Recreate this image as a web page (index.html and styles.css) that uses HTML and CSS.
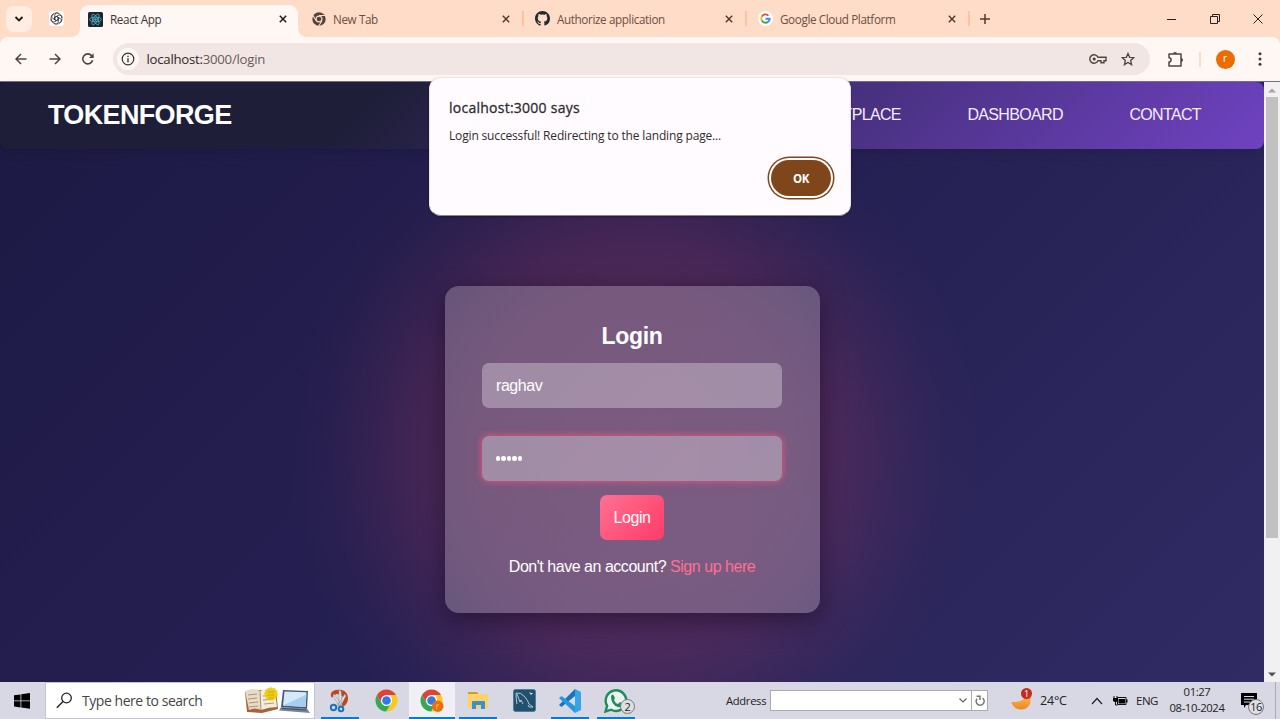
FILE: index.html
```html
<!DOCTYPE html>
<html lang="en">
<head>
<meta charset="utf-8">
<title>React App</title>
<link rel="stylesheet" href="styles.css">
</head>
<body>
<div class="screen">
  <header class="tabstrip">
    <div class="tab-search"><svg width="10" height="8" viewBox="0 0 10 8"><path d="M1.5 2 5 5.5 8.500 2" fill="none" stroke="#221a15" stroke-width="1.900"/></svg></div>
    <div class="pinned"><svg width="13" height="13" viewBox="0 0 24 24" fill="none" stroke="#333" stroke-width="1.600"><path d="M12 8.200 15.300 10v4L12 15.800 8.700 14v-4z"/><path d="M8.700 14V6a4.300 4.300 0 0 1 7.700-2.600"/><path d="M8.700 14V6a4.300 4.300 0 0 1 7.700-2.600" transform="rotate(60 12 12)"/><path d="M8.700 14V6a4.300 4.300 0 0 1 7.700-2.600" transform="rotate(120 12 12)"/><path d="M8.700 14V6a4.300 4.300 0 0 1 7.700-2.600" transform="rotate(180 12 12)"/><path d="M8.700 14V6a4.300 4.300 0 0 1 7.700-2.600" transform="rotate(240 12 12)"/><path d="M8.700 14V6a4.300 4.300 0 0 1 7.700-2.600" transform="rotate(300 12 12)"/><circle cx="12" cy="12" r="10.300" stroke-width="1.200"/></svg></div>
    <div class="tab tab-active">
      <svg class="fav" width="15" height="15" viewBox="0 0 15 15"><rect width="15" height="15" rx="1.500" fill="#20232a"/><g fill="none" stroke="#4cbcd8" stroke-width=".8"><ellipse cx="7.500" cy="7.500" rx="6" ry="2.300"/><ellipse cx="7.500" cy="7.500" rx="6" ry="2.300" transform="rotate(60 7.500 7.500)"/><ellipse cx="7.500" cy="7.500" rx="6" ry="2.300" transform="rotate(120 7.500 7.500)"/></g><circle cx="7.500" cy="7.500" r="1.200" fill="#4cbcd8"/></svg>
      <span class="tab-title">React App</span>
      <svg class="close" width="8" height="8" viewBox="0 0 8 8"><path d="M.8.8 7.200 7.200M7.200.8.8 7.200" stroke="#221a15" stroke-width="1.500"/></svg>
    </div>
    <div class="tab">
      <svg class="fav" width="14" height="14" viewBox="0 0 24 24"><circle cx="12" cy="12" r="11.500" fill="#51443d"/><circle cx="12" cy="12" r="5" fill="#51443d" stroke="#ffdcc8" stroke-width="2"/><path d="M12 6h11M7 15 1.500 5.500M17 15l-5.500 9" stroke="#ffdcc8" stroke-width="1.800"/></svg>
      <span class="tab-title">New Tab</span>
      <svg class="close" width="8" height="8" viewBox="0 0 8 8"><path d="M.8.8 7.200 7.200M7.200.8.8 7.200" stroke="#51372b" stroke-width="1.400"/></svg>
    </div>
    <div class="tab">
      <svg class="fav" width="15" height="15" viewBox="0 0 16 16"><path fill="#24292f" d="M8 0C3.580 0 0 3.580 0 8c0 3.540 2.290 6.530 5.470 7.590.4.070.55-.17.55-.38 0-.19-.01-.82-.01-1.490-2.010.37-2.530-.49-2.690-.94-.09-.23-.48-.94-.82-1.130-.28-.15-.68-.52-.01-.53.63-.01 1.080.58 1.230.82.72 1.210 1.870.87 2.330.66.070-.52.28-.87.51-1.070-1.780-.2-3.640-.89-3.640-3.950 0-.87.310-1.590.82-2.150-.08-.2-.36-1.020.080-2.120 0 0 .67-.21 2.200.82a7.500 7.500 0 0 1 4 0c1.530-1.040 2.200-.82 2.200-.82.44 1.100.16 1.920.080 2.120.51.56.82 1.270.82 2.150 0 3.070-1.870 3.750-3.650 3.950.29.25.54.73.54 1.480 0 1.070-.01 1.930-.01 2.200 0 .21.15.46.55.38A8 8 0 0 0 16 8c0-4.420-3.580-8-8-8z"/></svg>
      <span class="tab-title">Authorize application</span>
      <svg class="close" width="8" height="8" viewBox="0 0 8 8"><path d="M.8.8 7.200 7.200M7.200.8.8 7.200" stroke="#51372b" stroke-width="1.400"/></svg>
    </div>
    <div class="tab">
      <svg class="fav" width="15" height="15" viewBox="0 0 20 20"><circle cx="10" cy="10" r="10" fill="#fff"/><g fill="none" stroke-width="2.500"><path d="M14 6.200A5.600 5.600 0 0 0 5 7.500" stroke="#ea4335"/><path d="M5 7.500a5.600 5.600 0 0 0 0 5" stroke="#fbbc05"/><path d="M5 12.500a5.600 5.600 0 0 0 8.600 1.900" stroke="#34a853"/><path d="M13.600 14.400c1.500-1.200 2-2.500 2-4.100H10" stroke="#4285f4"/></g></svg>
      <span class="tab-title">Google Cloud Platform</span>
      <svg class="close" width="8" height="8" viewBox="0 0 8 8"><path d="M.8.8 7.200 7.200M7.200.8.8 7.200" stroke="#51372b" stroke-width="1.400"/></svg>
    </div>
    <svg class="newtab" width="10" height="10" viewBox="0 0 10 10"><path d="M5 0v10M0 5h10" stroke="#51372b" stroke-width="1.500"/></svg>
    <div class="window-controls">
      <svg width="10" height="10" viewBox="0 0 10 10"><path d="M0 5.500h9" stroke="#222"/></svg>
      <svg width="10" height="10" viewBox="0 0 10 10"><path d="M.5 2.500h7v7h-7zM2.500 2.500V.5h7v7h-2" fill="none" stroke="#222"/></svg>
      <svg width="10" height="10" viewBox="0 0 10 10"><path d="m.5.5 9 9m0-9-9 9" stroke="#222"/></svg>
    </div>
  </header>

  <div class="toolbar">
    <svg class="nav-icon" width="12" height="12" viewBox="0 0 12 12"><path d="M11.500 6H1.300M6 1 1 6l5 5" fill="none" stroke="#51443d" stroke-width="1.500"/></svg>
    <svg class="nav-icon" width="12" height="12" viewBox="0 0 12 12"><path d="M.5 6h10.200M6 1l5 5-5 5" fill="none" stroke="#51443d" stroke-width="1.500"/></svg>
    <svg class="nav-icon" width="12" height="12" viewBox="0 0 12 12"><path d="M10.600 7.300A5 5 0 1 1 9.700 2.700L11 4" fill="none" stroke="#51443d" stroke-width="1.600"/><path d="M11.600.3v4.700H7z" fill="#51443d"/></svg>
    <div class="omnibox">
      <span class="site-info"><svg width="14" height="14" viewBox="0 0 14 14"><circle cx="7" cy="7" r="5.800" fill="none" stroke="#3b302b" stroke-width="1.200"/><path d="M7 6.200v4M7 3.700v1.300" stroke="#3b302b" stroke-width="1.400"/></svg></span>
      <span class="url">localhost:<span class="url-path">3000/login</span></span>
      <svg class="key" width="18" height="12" viewBox="0 0 18 12"><path d="M9 4.200A4.300 4.300 0 1 0 9 7.800h3v2h3v-2h2V4.200z" fill="none" stroke="#51443d" stroke-width="1.400"/><circle cx="5.200" cy="6" r="1.600" fill="#51443d"/></svg>
      <svg class="star" width="14" height="14" viewBox="0 0 24 24"><path d="m12 2.500 2.800 6.700 7.200.6-5.500 4.700 1.700 7L12 17.800l-6.200 3.700 1.700-7L2 9.800l7.200-.6z" fill="none" stroke="#51443d" stroke-width="2.200"/></svg>
    </div>
    <svg class="puzzle" width="17" height="17" viewBox="0 0 17 17"><path d="M2 3h12v12H2v-4a2.100 2.100 0 0 0 0-4.200z" fill="none" stroke="#51443d" stroke-width="1.500" stroke-linejoin="round"/><path d="M6 3a2 2 0 0 1 4 0zM14 7a2 2 0 0 1 0 4z" fill="#51443d"/></svg>
    <span class="divider"></span>
    <span class="profile">r</span>
    <svg class="menu" width="4" height="14" viewBox="0 0 4 14" fill="#51372b"><circle cx="2" cy="1.800" r="1.500"/><circle cx="2" cy="7" r="1.500"/><circle cx="2" cy="12.200" r="1.500"/></svg>
  </div>

  <div class="viewport">
    <main class="page">
      <nav class="navbar">
        <span class="logo">TOKENFORGE</span>
        <div class="links"><a>MARKETPLACE</a><a>DASHBOARD</a><a>CONTACT</a></div>
      </nav>
      <section class="stage">
        <form class="card">
          <h2 class="card-title">Login</h2>
          <div class="field">raghav</div>
          <div class="field field-focus"><span class="dots"><i></i><i></i><i></i><i></i><i></i></span></div>
          <button type="button" class="submit">Login</button>
          <p class="signup">Don't have an account? <a>Sign up here</a></p>
        </form>
      </section>
    </main>
    <div class="scrollbar">
      <svg width="8" height="5" viewBox="0 0 8 5"><path d="m0 4.500 4-4 4 4z" fill="#a3a3a3"/></svg>
      <span class="thumb"></span>
      <svg class="arrow-down" width="8" height="5" viewBox="0 0 8 5"><path d="m0 .5 4 4 4-4z" fill="#505050"/></svg>
    </div>
  </div>

  <footer class="taskbar">
    <div class="start"><svg width="16" height="16" viewBox="0 0 16 16"><path d="M0 2.300 6.500 1.400v6.100H0zM7.300 1.300 16 0v7.500H7.300zM0 8.300h6.500v6.100L0 13.500zM7.300 8.300H16v7.500l-8.700-1.200z"/></svg></div>
    <div class="search">
      <svg width="17" height="17" viewBox="0 0 17 17"><circle cx="10.500" cy="6" r="4.800" fill="none" stroke="#222" stroke-width="1.300"/><path d="M7 9.500.8 15.800" stroke="#222" stroke-width="1.400"/></svg>
      <span class="search-text">Type here to search</span>
      <svg class="art" width="66" height="28" viewBox="0 0 66 28"><path d="m1 5 14-2 17 0 2 19-16 4-15-1z" fill="#a5643f"/><path d="M1 4q9-4 15 0l1 19q-6-3-12 0z" fill="#e9dcc4"/><path d="M16 4q8-4 15-1l2 17q-8 0-16 3z" fill="#f5ecd8"/><path d="M16 4l1 20M4 8l9-1M4 12l9-1M5 16l9-1M5 20l9-1M19 9l9-1M19 13l10-1M20 17l10-1" stroke="#8d765f" stroke-width=".7"/><circle cx="27" cy="7" r="6" fill="#efcb13" stroke="#efcb13" stroke-width="1.500" stroke-dasharray="2 1"/><path d="M24 5h6M23 8h7M25 11h4" stroke="#d5a510"/><path d="m39 3 25 1-1 18-26-2z" fill="#46587a"/><path d="m40.500 4.500 22 .8-.9 14.700-22.600-1.500z" fill="#d5e9fa"/><path d="m39 18.500 23.500-11-.9 12.500z" fill="#a5cff0"/><path d="m37 20 26 1.500 3 4.500-31-2.500z" fill="#78849a"/><path d="m38 21.500 24 1.500" stroke="#434c60" stroke-width="1.200"/></svg>
    </div>
    <div class="app running"><svg width="24" height="24" viewBox="0 0 24 24"><path d="M5 2q4-2 9-1 6 2 6 8t-5 9l-2-3q4-3 2-7-2-3-6-3-4 1-5 4Q1 5 5 2z" fill="#c64322"/><path d="m11 1 2 1 1 14-3 1zM17 5l1 2-7 12-2-2zM5 6l1-1 7 10-2 2z" fill="#e6e8ea" stroke="#8b9096" stroke-width=".6"/><circle cx="5.500" cy="18.500" r="2.700" fill="none" stroke="#1976b8" stroke-width="2"/><circle cx="13" cy="20" r="2.300" fill="none" stroke="#1976b8" stroke-width="2"/></svg></div>
    <div class="app"><svg width="23" height="23" viewBox="0 0 48 48"><path d="M4.100 12.500A23 23 0 0 1 43.900 12.500H24L14 29.800z" fill="#df4337"/><path d="M4.100 12.500A23 23 0 0 0 23.500 47L34 29.800H14z" fill="#35a853"/><path d="M43.900 12.500A23 23 0 0 1 23.500 47L34 29.800 34 12.500z" fill="#fbc91b"/><circle cx="24" cy="24" r="11.500" fill="#fff"/><circle cx="24" cy="24" r="9" fill="#3577e5"/></svg></div>
    <div class="app running selected"><svg width="24" height="24" viewBox="0 0 50 50"><path d="M4.100 12.500A23 23 0 0 1 43.900 12.500H24L14 29.800z" fill="#df4337"/><path d="M4.100 12.500A23 23 0 0 0 23.500 47L34 29.800H14z" fill="#35a853"/><path d="M43.900 12.500A23 23 0 0 1 23.500 47L34 29.800 34 12.500z" fill="#fbc91b"/><circle cx="24" cy="24" r="11.500" fill="#fff"/><circle cx="24" cy="24" r="9" fill="#3577e5"/><circle cx="37" cy="36" r="12" fill="#ed6f08"/><path d="M35 42V32m0 4q1-4 5-4" fill="none" stroke="#f8ad70" stroke-width="2"/></svg></div>
    <div class="app running"><svg width="22" height="20" viewBox="0 0 22 20"><path d="M1 1h9l2 3H1z" fill="#d99a1c"/><path d="M1 3h20v14H1z" fill="#fbd366"/><path d="M5 18V11q0-1 1-1h11q1 0 1 1v7h-4v-4H9v4z" fill="#3992cf"/></svg></div>
    <div class="app"><svg width="23" height="23" viewBox="0 0 23 23"><rect x=".5" y=".5" width="22" height="22" rx="2" fill="#21516f" stroke="#527d94"/><path d="M4 15Q3 9 3 4q5-1 9 4 3 4 4 7l4 3-4 0-1-2M4 5l3 8 1-2 2 4" fill="none" stroke="#c2d7e0" stroke-width=".9"/><path d="m16 3 2 1 2 0-2 2z" fill="#dce8ee"/></svg></div>
    <div class="app running"><svg width="24" height="24" viewBox="0 0 24 24"><path d="M17 0v7L3.500 18 1 16z" fill="#1a74b4"/><path d="m17 24-16-15 2.500-2L17 17z" fill="#2398dd"/><path d="m17 0 6 3v18l-6 3z" fill="#36a5e8"/></svg></div>
    <div class="app running chat"><svg width="24" height="24" viewBox="0 0 24 24"><path d="m1.500 22.500 1.600-5.700a10.300 10.300 0 1 1 4 3.900z" fill="#edf4ef" stroke="#218c5a" stroke-width="2.400"/><path d="M7 7q2-3 3 0l1 2-1 2q1 3 4 4l2-2 3 2q0 4-5 3Q7 16 7 7z" fill="#218c5a"/></svg><span class="badge">2</span></div>
    <div class="address"><span class="address-label">Address</span><div class="address-box"><svg width="8" height="5" viewBox="0 0 8 5"><path d="m.5.500 3.500 3.500 3.500-3.500" fill="none" stroke="#666" stroke-width="1.200"/></svg><span class="refresh"><svg width="10" height="11" viewBox="0 0 10 11"><path d="M7.500 3a4 4 0 1 1-5.500.8M1.500 1.300H5V5" fill="none" stroke="#777" stroke-width="1.500"/></svg></span></div></div>
    <div class="tray">
      <span class="weather"><svg width="22" height="21" viewBox="0 0 22 21"><defs><linearGradient id="moon" x2="0" y2="1"><stop stop-color="#fbc65b"/><stop offset="1" stop-color="#ef8620"/></linearGradient></defs><path d="M16.500 2Q16 13 1 12q3 7 9 7.500 7 .5 10-5.500 2-7-3.500-12z" fill="url(#moon)"/></svg><span class="alert-count">1</span></span>
      <span class="temp">24°C</span>
      <svg class="chevron" width="12" height="8" viewBox="0 0 12 8"><path d="m1 7 5-5.500L11 7" fill="none" stroke="#222" stroke-width="1.200"/></svg>
      <svg class="battery" width="16" height="10" viewBox="0 0 16 10"><path d="M5.500 1.500h8.500v7H5.500z" stroke="#111" fill="none"/><path d="M6.500 3h6.500v4.500H6.500zM14 3.500h1.500v3H14zM1 2h5v3q-2.500 2-5 0z"/><path d="M2 0v2m3-2v2M3.500 5v4h2" fill="none" stroke="#111"/></svg>
      <span class="lang">ENG</span>
      <span class="clock"><span>01:27</span><span>08-10-2024</span></span>
      <span class="notice"><svg width="16" height="16" viewBox="0 0 16 16"><path d="M0 0h16v12H5l-2 3v-3H0z"/><path d="M3 3.500h10M3 6.200h10M3 9h6" stroke="#d8d7e4"/></svg><span class="badge">16</span></span>
    </div>
    <span class="show-desktop"></span>
  </footer>

  <div class="dialog" role="alertdialog">
    <div class="dialog-title">localhost:3000 says</div>
    <div class="dialog-text">Login successful! Redirecting to the landing page...</div>
    <button type="button" class="ok">OK</button>
  </div>
</div>
</body>
</html>
```
FILE: styles.css
```css
* { box-sizing: border-box; }
body { margin: 0; overflow: hidden; font-family: "Open Sans", "Noto Sans", sans-serif; }
svg { display: block; flex: none; }
.screen { position: relative; width: 1280px; height: 719px; display: flex; flex-direction: column; overflow: hidden; background: #ffdcc8; }

.tabstrip { height: 37px; display: flex; align-items: center; padding-left: 6px; flex: none; background: #ffdcc8; }
.tab-search { width: 26px; height: 26px; border-radius: 8px; background: #ffece2; display: grid; place-items: center; }
.pinned { width: 15px; height: 15px; margin: 0 24px 0 17px; border-radius: 3px; background: #fff; display: grid; place-items: center; }
.tab { width: 223px; height: 15px; display: flex; align-items: center; padding: 0 12px 0 11px; color: #6b5042; font-size: 11.700px; border-right: 2px solid #ffc3a0; }
.tab-active { position: relative; width: 210px; margin-right: 3px; height: 32px; margin-top: 5px; padding: 0 11px 4px 0; color: #40352e; border-right: 0; }
.tab-active::before { content: ""; position: absolute; z-index: 0; inset: 0 0 0 -8px; border-radius: 9px 9px 0 0; background: #fff7f3; }
.tab-active::after { content: ""; position: absolute; left: -16px; right: -8px; bottom: 0; height: 8px; background: radial-gradient(circle at 0 0, transparent 7.500px, #fff7f3 8px) left / 8px 8px no-repeat, radial-gradient(circle at 100% 0, transparent 7.500px, #fff7f3 8px) right / 8px 8px no-repeat; }
.tab-active > * { position: relative; z-index: 1; }
.tab-title { flex: 1; margin-left: 7px; white-space: nowrap; letter-spacing: -.38px; }
.newtab { margin-left: 10px; }
.window-controls { margin-left: auto; margin-right: 17px; display: flex; gap: 33px; }

.toolbar { height: 44px; flex: none; display: flex; align-items: center; padding: 0 18px 0 15px; background: #fff7f3; border-radius: 8px 8px 0 0; }
.nav-icon { margin-right: 21.500px; }
.omnibox { width: 1037px; height: 32px; margin-left: -3px; display: flex; align-items: center; padding: 0 15px 0 4px; border-radius: 16px; background: #f1e6e4; }
.site-info { width: 22px; height: 22px; border-radius: 50%; background: #fff7f3; display: grid; place-items: center; }
.url { flex: 1; margin-left: 8px; font-size: 13.200px; letter-spacing: -.25px; color: #302824; }
.url-path { color: #685c57; }
.key { margin-right: 14px; }
.puzzle { margin-left: 17px; }
.divider { width: 2px; height: 15px; margin-left: 15px; background: #ffdcc8; }
.profile { width: 19px; height: 19px; margin: 0 auto 0 15px; border-radius: 50%; background: #ed6c02; color: #fff; font-size: 10px; line-height: 17px; text-align: center; }

.viewport { height: 601px; flex: none; display: flex; border-top: 1px solid #777080; }
.page { width: 1264px; display: flex; flex-direction: column; font-family: "Liberation Sans", Arial, sans-serif; background: radial-gradient(circle at 632px 368px, rgba(255, 75, 115, .22) 0, rgba(255, 75, 115, .19) 160px, rgba(255, 75, 115, .15) 210px, rgba(255, 75, 115, .07) 265px, rgba(255, 75, 115, .02) 310px, rgba(255, 75, 115, 0) 350px), linear-gradient(135deg, #1d1944, #252052 50%, #302b63); }
.navbar { height: 67px; flex: none; display: flex; align-items: center; justify-content: space-between; padding: 0 63px 2px 48px; color: #fff; border-radius: 8px; background: linear-gradient(135deg, #1e1e38 0%, #1e1e38 29%, #6f42c1 100%); box-shadow: 0 4px 10px rgba(0, 0, 0, .1); }
.logo { font-size: 27px; font-weight: 700; letter-spacing: -.65px; padding-top: 1px; }
.links { display: flex; gap: 66.500px; font-size: 16px; letter-spacing: -.65px; color: #f5edfc; }
.stage { flex: 1; display: flex; justify-content: center; align-items: flex-start; padding-top: 137px; }
.card { width: 375px; height: 327px; display: flex; flex-direction: column; align-items: center; padding: 37px; border-radius: 14px; color: #fff; background: rgba(255, 255, 255, .23); box-shadow: 0 7px 24px rgba(15, 5, 25, .5); }
.card-title { margin: 0 0 14px; font-size: 23px; line-height: 26px; letter-spacing: -.3px; }
.field { width: 300px; height: 45px; flex: none; display: flex; align-items: center; padding: 0 0 0 14px; border-radius: 7px; background: rgba(255, 255, 255, .31); font-size: 16px; letter-spacing: -.45px; margin-bottom: 28px; }
.field-focus { margin-bottom: 14px; box-shadow: 0 0 7px #f4527a; }
.dots { display: flex; gap: 1px; }
.dots i { width: 4.400px; height: 4.400px; border-radius: 50%; background: #fff; }
.submit { width: 64px; height: 45px; flex: none; padding: 0; border: 0; border-radius: 7px; background: linear-gradient(135deg, #ff7192, #ff3b69); color: #fff; font: 16px "Liberation Sans", Arial, sans-serif; letter-spacing: -.45px; }
.signup { margin: 17px 0 0; font-size: 16px; line-height: 20px; letter-spacing: -.47px; white-space: nowrap; }
.signup a { color: #ff6f91; }
.scrollbar { width: 16px; display: flex; flex-direction: column; align-items: center; padding: 6px 0 5px; background: #f1f1f1; }
.thumb { width: 12px; height: 441px; margin-top: 4px; background: #c1c1c1; }
.arrow-down { margin-top: auto; }

.taskbar { height: 37px; flex: none; display: flex; align-items: stretch; background: #d8d7e4; color: #222; }
.start { width: 45px; display: flex; align-items: center; padding-left: 14px; }
.search { width: 270px; display: flex; align-items: center; padding: 0 4px 0 10px; margin-right: 2px; background: #fff; border: 1px solid #c5c4d0; }
.search-text { flex: 1; margin-left: 9px; font-size: 14px; color: #454545; letter-spacing: -.45px; }
.app { position: relative; width: 46px; display: grid; place-items: center; }
.app.running::after { content: ""; position: absolute; bottom: 0; left: 4px; right: 4px; height: 2px; background: #0d78cd; }
.app.selected { background: #f0eff5; }
.app.selected::after { left: 0; right: 0; }
.badge { position: absolute; width: 15px; height: 15px; border-radius: 50%; border: 1px solid #777; background: #dedee5; font-size: 11px; line-height: 13px; text-align: center; letter-spacing: -.5px; }
.chat .badge { left: 27px; top: 17px; }
.address { display: flex; align-items: center; margin-left: 87px; }
.address-label { font-size: 11.200px; letter-spacing: -.3px; width: 44px; }
.address-box { width: 218px; height: 21px; display: flex; align-items: center; justify-content: flex-end; background: #fff; border: 1px solid #aaaab4; }
.refresh { margin-left: 4px; width: 16px; height: 19px; border-left: 1px solid #aaaab4; display: grid; place-items: center; }
.tray { display: flex; align-items: center; margin-left: 22px; font-size: 12px; }
.weather { position: relative; }
.alert-count { position: absolute; top: -2px; left: 11px; width: 11px; height: 11px; border-radius: 50%; background: #c42b1c; color: #fff; font-size: 9px; line-height: 11px; text-align: center; }
.temp { width: 44px; margin-left: 8px; letter-spacing: -.2px; font-size: 12.500px; }
.chevron { margin-left: 7px; }
.battery { margin-left: 9px; }
.lang { width: 26px; margin-left: 8px; font-size: 11.500px; letter-spacing: -.5px; }
.clock { width: 58px; margin-left: 6px; display: flex; flex-direction: column; align-items: center; font-size: 11.300px; line-height: 16.500px; letter-spacing: -.4px; white-space: nowrap; margin-top: -1px; }
.notice { position: relative; margin-left: 15px; }
.notice .badge { left: 7px; top: 6px; width: 16px; height: 16px; }
.show-desktop { margin-left: auto; width: 5px; border-left: 1px solid #aaa9b5; }

.dialog { position: absolute; z-index: 5; left: 429px; top: 77px; width: 422px; height: 139px; display: flex; flex-direction: column; padding: 21px 19px 0 19px; border-radius: 12px; background: #fffbff; color: #302b2e; border: 1px solid #eee3e0; border-bottom-color: #8c8494; box-shadow: 0 1px 2px rgba(0, 0, 0, .3); }
.dialog-title { font-size: 14px; line-height: 18px; letter-spacing: .25px; -webkit-text-stroke: .3px #302b2e; }
.dialog-text { margin-top: 11px; font-size: 12px; line-height: 16px; letter-spacing: -.16px; }
.ok { align-self: flex-end; width: 60px; height: 36px; padding: 0; margin-top: 16px; border: 0; border-radius: 18px; background: #80461b; color: #fff; font: 700 11.500px "Open Sans", sans-serif; letter-spacing: -.3px; box-shadow: 0 0 0 2px #fff, 0 0 0 3.500px #80461b; }
```
